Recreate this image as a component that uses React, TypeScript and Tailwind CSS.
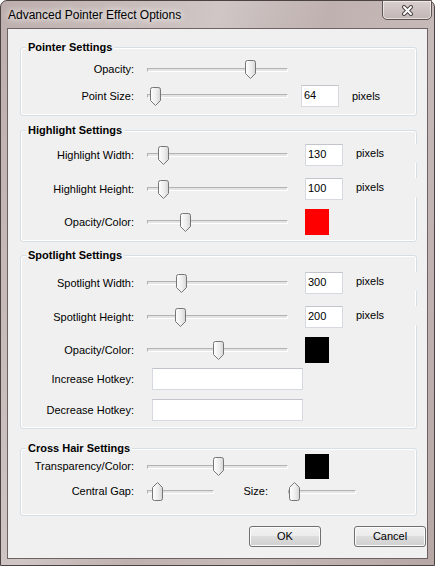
import React from 'react';

const font = "font-['Liberation_Sans',Arial,sans-serif]";

function Thumb({ left, up }: { left: number; up?: boolean }) {
  // trackbar thumb, pointed down by default
  const d = up
    ? 'M5.5 0.5 L10.5 5.5 V16.5 Q10.5 18.5 8.5 18.5 H2.5 Q0.5 18.5 0.5 16.5 V5.5 Z'
    : 'M2.5 0.5 H8.5 Q10.5 0.5 10.5 2.5 V13.5 L5.5 18.5 L0.5 13.5 V2.5 Q0.5 0.5 2.5 0.5 Z';
  return (
    <svg
      width="11"
      height="19"
      viewBox="0 0 11 19"
      className="absolute top-0"
      style={{ left }}
    >
      <defs>
        <linearGradient id="thumbFill" x1="0" y1="0" x2="1" y2="0">
          <stop offset="0" stopColor="#ffffff" />
          <stop offset="0.6" stopColor="#ececec" />
          <stop offset="1" stopColor="#d4d4d4" />
        </linearGradient>
      </defs>
      <path d={d} fill="url(#thumbFill)" stroke="#767676" />
    </svg>
  );
}

function Slider({ className, pos, up }: { className: string; pos: number; up?: boolean }) {
  return (
    <div className={`relative flex h-[19px] shrink-0 items-center ${className}`}>
      <div className="h-[4px] w-full border border-t-[#b2b2b2] border-l-[#b2b2b2] border-b-white border-r-white bg-[#e4e4e4]" />
      <Thumb left={pos} up={up} />
    </div>
  );
}

function Box({ children, className }: { children?: React.ReactNode; className: string }) {
  return (
    <div
      className={`h-[22px] shrink-0 border border-[#d6dae0] border-t-[#c2c6cc] bg-white pl-[2px] leading-[18px] ${className}`}
    >
      {children}
    </div>
  );
}

function Pixels() {
  // wide label, its background hides the group border like the original
  return <span className="ml-[13px] h-[19px] w-[64px] shrink-0 self-start bg-[#f0f0f0] leading-[19px]">pixels</span>;
}

function Swatch({ color, className }: { color: string; className: string }) {
  return <div className={`ml-[17px] w-[24px] shrink-0 ${color} ${className}`} />;
}

function Row({ label, className, children }: { label: string; className: string; children?: React.ReactNode }) {
  return (
    <div className={`flex items-center ${className}`}>
      <span className="w-[113px] shrink-0 text-right">{label}</span>
      {children}
    </div>
  );
}

function Group({ title, className, children }: { title: string; className: string; children: React.ReactNode }) {
  return (
    <div
      className={`ml-[12px] w-[397px] shrink-0 rounded-[3px] border border-[#d5dfe5] shadow-[inset_0_0_0_1px_#ffffff] ${className}`}
    >
      <div className="-mt-[7px] ml-[5px] h-[13px] w-fit bg-[#f0f0f0] px-[2px] font-bold leading-[13px]">{title}</div>
      {children}
    </div>
  );
}

function Button({ children }: { children: React.ReactNode }) {
  return (
    <button className="h-[21px] w-[72px] rounded-[3px] border border-[#707070] bg-[linear-gradient(to_bottom,#f2f2f2_0%,#ebebeb_50%,#dddddd_50%,#cfcfcf_100%)] text-[11px] leading-[17px] shadow-[inset_0_0_0_1px_#fcfcfc]">
      {children}
    </button>
  );
}

export default function App() {
  return (
    <div className={`h-[566px] w-[435px] ${font} text-black`}>
      <div className="flex h-full flex-col rounded-t-[7px] border border-[#4b4343] bg-[linear-gradient(110deg,#bcaeac_0%,#c8bcba_20%,#cfc6c5_35%,#bfb1af_52%,#c6bab8_70%,#b6a7a5_100%)]">
        {/* Title bar */}
        <div className="flex h-[27px] shrink-0 items-start justify-between pl-[7px] pr-[2px]">
          <span className="self-center text-[12px] [text-shadow:0_0_6px_#ffffff,0_0_10px_rgba(255,255,255,0.8)]">
            Advanced Pointer Effect Options
          </span>
          <div className="-mt-[1px] flex h-[20px] w-[50px] items-center justify-center rounded-b-[5px] border border-[#5e5454] bg-[linear-gradient(to_bottom,#d8cfce,#c2b6b4)] shadow-[inset_0_0_0_1px_rgba(255,255,255,0.55)]">
            <svg width="13" height="11" viewBox="0 0 13 11">
              <path d="M3 2 L10 9 M10 2 L3 9" stroke="#4f4646" strokeWidth="4" strokeLinecap="round" />
              <path d="M3 2 L10 9 M10 2 L3 9" stroke="#ffffff" strokeWidth="2" strokeLinecap="round" />
            </svg>
          </div>
        </div>

        {/* Client area */}
        <div className="flex flex-1 flex-col px-[6px] pb-[6px]">
          <div className="flex flex-1 flex-col border border-[#6d6262] bg-[#f0f0f0] text-[11px] leading-[13px]">
            <Group title="Pointer Settings" className="mt-[18px] h-[69px]">
              <Row label="Opacity:" className="mt-[6px] h-[19px]">
                <Slider className="ml-[13px] w-[141px]" pos={98} />
              </Row>
              <Row label="Point Size:" className="mt-[6px] h-[22px]">
                <Slider className="ml-[13px] w-[141px]" pos={3} />
                <Box className="ml-[13px] w-[38px]">64</Box>
                <span className="ml-[13px]">pixels</span>
              </Row>
            </Group>

            <Group title="Highlight Settings" className="mt-[14px] h-[112px]">
              <Row label="Highlight Width:" className="mt-[7px] h-[22px]">
                <Slider className="ml-[13px] w-[141px]" pos={11} />
                <Box className="ml-[17px] w-[38px]">130</Box>
                <Pixels />
              </Row>
              <Row label="Highlight Height:" className="mt-[12px] h-[22px]">
                <Slider className="ml-[13px] w-[141px]" pos={11} />
                <Box className="ml-[17px] w-[38px]">100</Box>
                <Pixels />
              </Row>
              <Row label="Opacity/Color:" className="mt-[9px] h-[26px]">
                <Slider className="ml-[13px] w-[141px]" pos={33} />
                <Swatch color="bg-[#ff0000]" className="h-[26px]" />
              </Row>
            </Group>

            <Group title="Spotlight Settings" className="mt-[13px] h-[174px]">
              <Row label="Spotlight Width:" className="mt-[10px] h-[22px]">
                <Slider className="ml-[13px] w-[141px]" pos={29} />
                <Box className="ml-[17px] w-[38px]">300</Box>
                <Pixels />
              </Row>
              <Row label="Spotlight Height:" className="mt-[12px] h-[22px]">
                <Slider className="ml-[13px] w-[141px]" pos={28} />
                <Box className="ml-[17px] w-[38px]">200</Box>
                <Pixels />
              </Row>
              <Row label="Opacity/Color:" className="mt-[9px] h-[26px]">
                <Slider className="ml-[13px] w-[141px]" pos={66} />
                <Swatch color="bg-black" className="h-[26px]" />
              </Row>
              <Row label="Increase Hotkey:" className="mt-[5px] h-[22px]">
                <Box className="ml-[18px] w-[151px]" />
              </Row>
              <Row label="Decrease Hotkey:" className="mt-[9px] h-[22px]">
                <Box className="ml-[18px] w-[151px]" />
              </Row>
            </Group>

            <Group title="Cross Hair Settings" className="mt-[19px] h-[68px]">
              <Row label="Transparency/Color:" className="-mt-[1px] h-[25px]">
                <Slider className="ml-[13px] w-[141px]" pos={66} />
                <Swatch color="bg-black" className="h-[25px]" />
              </Row>
              <Row label="Central Gap:" className="mt-[3px] h-[19px]">
                <Slider className="ml-[13px] w-[67px]" pos={5} up />
                <span className="w-[54px] shrink-0 text-right">Size:</span>
                <Slider className="ml-[20px] w-[68px]" pos={1} up />
              </Row>
            </Group>

            <div className="mt-[10px] flex justify-end gap-[33px] pr-[1px]">
              <Button>OK</Button>
              <Button>Cancel</Button>
            </div>
          </div>
        </div>
      </div>
    </div>
  );
}
